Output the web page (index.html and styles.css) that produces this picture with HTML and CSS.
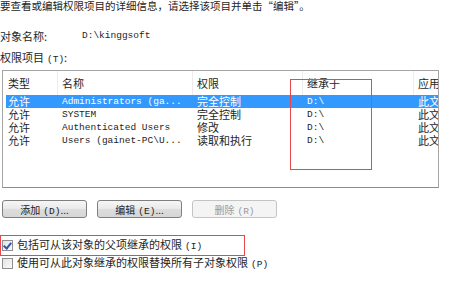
FILE: index.html
```html
<!DOCTYPE html>
<html lang="zh-CN">
<head>
    <meta charset="UTF-8">
    <meta name="viewport" content="width=device-width, initial-scale=1.0">
    <title>高级安全设置 - 权限</title>
    <link rel="stylesheet" href="styles.css">
</head>
<body>
<div class="dialog">
    <p class="intro">要查看或编辑权限项目的详细信息，请选择该项目并单击“编辑”。</p>

    <div class="object-row">
        <span class="object-label">对象名称:</span>
        <span class="mono">D:\kinggsoft</span>
    </div>

    <p class="list-label">权限项目<span class="key">(T)</span>:</p>

    <div class="list">
        <div class="list-head grid">
            <span>类型</span>
            <span>名称</span>
            <span>权限</span>
            <span>继承于</span>
            <span>应用</span>
        </div>
        <div class="list-row grid selected">
            <span>允许</span>
            <span class="mono">Administrators (ga...</span>
            <span>完全控制</span>
            <span class="mono">D:\</span>
            <span>此文件夹</span>
        </div>
        <div class="list-row grid">
            <span>允许</span>
            <span class="mono">SYSTEM</span>
            <span>完全控制</span>
            <span class="mono">D:\</span>
            <span>此文件夹</span>
        </div>
        <div class="list-row grid">
            <span>允许</span>
            <span class="mono">Authenticated Users</span>
            <span>修改</span>
            <span class="mono">D:\</span>
            <span>此文件夹</span>
        </div>
        <div class="list-row grid">
            <span>允许</span>
            <span class="mono">Users (gainet-PC\U...</span>
            <span>读取和执行</span>
            <span class="mono">D:\</span>
            <span>此文件夹</span>
        </div>
        <!-- annotation box over the inherited-from column -->
        <div class="mark-box"></div>
    </div>

    <div class="buttons">
        <button class="btn">添加<span class="key">(D)</span>...</button>
        <button class="btn">编辑<span class="key">(E)</span>...</button>
        <button class="btn" disabled>删除<span class="key">(R)</span></button>
    </div>

    <label class="check marked">
        <span class="box checked"></span>
        <span>包括可从该对象的父项继承的权限<span class="key">(I)</span></span>
    </label>
    <label class="check">
        <span class="box"></span>
        <span>使用可从此对象继承的权限替换所有子对象权限<span class="key">(P)</span></span>
    </label>
</div>
</body>
</html>
```

FILE: styles.css
```css
body {
    margin: 0;
    background-color: #fff;
    font-family: "Noto Sans CJK SC", "Noto Sans", sans-serif;
    font-size: 11px;
    color: #1e1e1e;
}
p {
    margin: 0;
}
.dialog {
    width: 469px;
    height: 292px;
    overflow: hidden;
}
.mono {
    font-family: "Liberation Mono", monospace;
    font-size: 9.5px;
}
.key {
    margin-left: 3px;
    font-family: "Liberation Mono", monospace;
    font-size: 9.5px;
}
.intro {
    height: 12px;
    line-height: 12px;
    font-size: 10.5px;
}
.object-row {
    margin-top: 17px;
    height: 14px;
    line-height: 14px;
    display: flex;
}
.object-label {
    width: 82px;
}
.list-label {
    margin-top: 7px;
    height: 14px;
    line-height: 14px;
}
.list {
    position: relative;
    margin: 6px 0 0 2px;
    width: 432px;
    height: 116px;
    border: 1px solid #a5a5a5;
    border-bottom-color: #8c8c8c;
    padding-left: 3px;
    overflow: hidden;
}
.grid {
    display: grid;
    grid-template-columns: 51px 135px 110px 111px 60px;
    white-space: nowrap;
}
.grid span {
    padding-left: 5px;
}
.grid span:first-child {
    padding-left: 2px;
}
.list-head {
    height: 24px;
    line-height: 24px;
    color: #1e1e1e;
}
.list-head span + span {
    border-left: 1px solid #ececec;
    padding-left: 4px;
}
.list-row {
    height: 13px;
    line-height: 13px;
}
.selected {
    background-color: #3399ff;
    color: #fff;
}
.mark-box {
    position: absolute;
    left: 287px;
    top: 8px;
    width: 80px;
    height: 89px;
    border: 1px solid #e8474c;
}
.buttons {
    margin-top: 12px;
    display: flex;
    gap: 10px;
    padding-left: 2px;
}
.btn {
    width: 85px;
    height: 18px;
    padding: 0;
    border: 1px solid #7f7f7f;
    border-radius: 3px;
    background: linear-gradient(#f6f6f6, #e9e9e9 50%, #dddddd 51%, #d6d6d6);
    font-family: "Noto Sans CJK SC", sans-serif;
    font-size: 10px;
    color: #222;
}
.btn:disabled {
    border-color: #c4c4c4;
    background: #f4f4f4;
    color: #9a9a9a;
}
.check {
    display: flex;
    align-items: center;
    gap: 4px;
    height: 14px;
    line-height: 14px;
    padding-left: 2px;
}
.check.marked {
    margin-top: 17px;
    width: 242px;
    height: 19px;
    border: 1px solid #e8474c;
    padding-left: 1px;
}
.box {
    width: 9px;
    height: 9px;
    border: 1px solid #8f8f8f;
    background: linear-gradient(135deg, #e4e4e4, #fafafa);
    position: relative;
}
.box.checked::after {
    content: "";
    position: absolute;
    left: 2px;
    top: 0;
    width: 3px;
    height: 6px;
    border: solid #2a56b8;
    border-width: 0 2px 2px 0;
    transform: rotate(40deg);
}
```
